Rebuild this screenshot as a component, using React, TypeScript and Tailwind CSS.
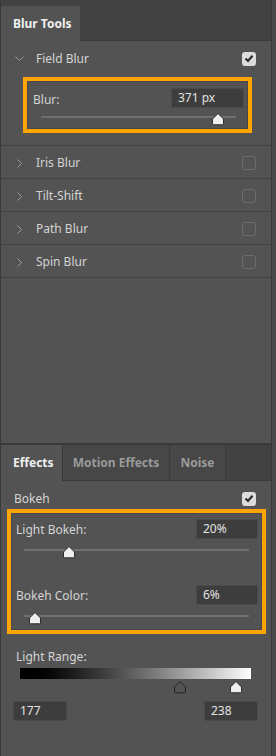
import React from "react";

const font = { fontFamily: '"Noto Sans", "Open Sans", sans-serif' };

function Thumb({ outline = false }: { outline?: boolean }) {
  return (
    <svg width="14" height="14" viewBox="0 0 14 14" className="block">
      <path
        d="M7 1.5 L12.5 7 L12.5 12 Q12.5 12.8 11.7 12.8 L2.3 12.8 Q1.5 12.8 1.5 12 L1.5 7 Z"
        fill={outline ? "none" : "#efefef"}
        stroke={outline ? "#222" : "#2e2e2e"}
        strokeWidth="1"
        strokeLinejoin="round"
      />
    </svg>
  );
}

function Check({ on }: { on: boolean }) {
  if (!on)
    return (
      <div className="h-[14px] w-[14px] rounded-[3px] border border-[#6c6c6c]" />
    );
  return (
    <div className="flex h-[14px] w-[14px] items-center justify-center rounded-[3px] bg-[#dcdcdc]">
      <svg width="10" height="9" viewBox="0 0 10 9">
        <path d="M1.5 4.5 L4 7 L8.5 1.8" fill="none" stroke="#2b2b2b" strokeWidth="2.2" />
      </svg>
    </div>
  );
}

function Chevron({ open }: { open?: boolean }) {
  return open ? (
    <svg width="9" height="6" viewBox="0 0 9 6" className="block">
      <path d="M0.5 0.5 L4.5 4.5 L8.5 0.5" fill="none" stroke="#9c9c9c" strokeWidth="1" />
    </svg>
  ) : (
    <svg width="6" height="9" viewBox="0 0 6 9" className="block">
      <path d="M0.5 0.5 L4.5 4.5 L0.5 8.5" fill="none" stroke="#9c9c9c" strokeWidth="1" />
    </svg>
  );
}

function Slider({ pct, left, width }: { pct: number; left: number; width: number }) {
  return (
    <div className="relative h-[14px]" style={{ marginLeft: left, width }}>
      <div className="absolute left-0 right-0 top-[4px] h-[2px] bg-[#6f6f6f]" />
      <div className="absolute top-0" style={{ left: `calc(${pct}% - 7px)` }}>
        <Thumb />
      </div>
    </div>
  );
}

function Field({ value, w }: { value: string; w: string }) {
  return (
    <div
      className={`flex h-[20px] items-center border border-[#4a4a4a] bg-[#3d3d3d] pl-[6px] text-[12px] text-[#e2e2e2] ${w}`}
    >
      {value}
    </div>
  );
}

const rows = ["Iris Blur", "Tilt-Shift", "Path Blur", "Spin Blur"];

export default function App() {
  return (
    <div className="flex h-[756px] w-[276px] bg-[#4a4a4a] text-[#d4d4d4]" style={font}>
      <div className="flex w-[272px] flex-col border-x border-[#3a3a3a]">
        {/* upper panel */}
        <div className="flex h-[443px] flex-col bg-[#535353]">
          <div className="h-[6px] bg-[#424242]" />
          <div className="flex h-[35px] bg-[#424242]">
            <div className="flex w-[79px] items-center bg-[#535353] pl-[12px] text-[12px] font-bold text-[#f0f0f0]">
              Blur Tools
            </div>
            <div className="flex-1 border-b border-[#3a3a3a]" />
          </div>

          {/* Field Blur */}
          <div className="border-b border-[#424242] pb-[12px]">
            <div className="flex h-[35px] items-center pl-[14px] pr-[15px]">
              <Chevron open />
              <span className="ml-[12px] flex-1 text-[12px]">Field Blur</span>
              <Check on />
            </div>
            <div className="ml-[22px] mr-[19px] mt-[1px] border-[4px] border-[#ffa500]">
              <div className="h-[48px] border border-[#474747] pt-[5px]">
                <div className="flex items-center justify-between pr-[3px]">
                  <span className="ml-[5px] mt-[4px] text-[12px]">Blur:</span>
                  <Field value="371 px" w="w-[73px]" />
                </div>
                <div className="mt-[3px]">
                  <Slider pct={91} left={13} width={195} />
                </div>
              </div>
            </div>
          </div>

          {rows.map((r) => (
            <div
              key={r}
              className="flex h-[33px] items-center border-b border-[#424242] pl-[16px] pr-[15px] pt-[2px]"
            >
              <Chevron />
              <span className="ml-[13px] flex-1 text-[12px]">{r}</span>
              <Check on={false} />
            </div>
          ))}
        </div>

        <div className="h-[2px] bg-[#3a3a3a]" />

        {/* lower tabs */}
        <div className="flex h-[36px] bg-[#424242]">
          <div className="flex w-[61px] items-center bg-[#535353] pl-[12px] text-[12px] font-bold text-[#f0f0f0]">
            Effects
          </div>
          <div className="flex w-[108px] items-center justify-center border-x border-b border-[#3a3a3a] bg-[#474747] text-[12px] font-bold text-[#9a9a9a]">
            Motion Effects
          </div>
          <div className="flex w-[56px] items-center justify-center border-r border-b border-[#3a3a3a] bg-[#474747] text-[12px] font-bold text-[#9a9a9a]">
            Noise
          </div>
          <div className="flex-1 border-b border-[#3a3a3a]" />
        </div>

        <div className="flex flex-1 flex-col bg-[#535353]">
          <div className="flex h-[27px] items-center pl-[13px] pr-[15px] pt-[8px]">
            <span className="flex-1 text-[12px]">Bokeh</span>
            <Check on />
          </div>
          <div className="ml-[6px] mr-[5px] mt-[1px] border-[4px] border-[#ffa500]">
            <div className="h-[117px] border border-[#474747] pt-[4px]">
              <div className="flex items-center justify-between pr-[3px]">
                <span className="ml-[4px] mt-[3px] text-[12px]">Light Bokeh:</span>
                <Field value="20%" w="w-[62px]" />
              </div>
              <div className="mt-[6px]">
                <Slider pct={20} left={12} width={225} />
              </div>
              <div className="mt-[25px] flex items-center justify-between pr-[3px]">
                <span className="ml-[4px] mt-[3px] text-[12px]">Bokeh Color:</span>
                <Field value="6%" w="w-[62px]" />
              </div>
              <div className="mt-[6px]">
                <Slider pct={5} left={12} width={225} />
              </div>
            </div>
          </div>

          <div className="ml-[15px] mt-[14px] text-[12px]">Light Range:</div>
          <div className="ml-[19px] mt-[2px] h-[11px] w-[231px] bg-gradient-to-r from-black to-white" />
          <div className="relative ml-[19px] mt-[1px] h-[15px] w-[231px]">
            <div className="absolute top-0 left-[153px]">
              <Thumb outline />
            </div>
            <div className="absolute top-0 left-[209px]">
              <Thumb />
            </div>
          </div>
          <div className="ml-[12px] mr-[13px] mt-[6px] flex justify-between">
            <Field value="177" w="w-[54px]" />
            <Field value="238" w="w-[54px]" />
          </div>
        </div>
      </div>
    </div>
  );
}
